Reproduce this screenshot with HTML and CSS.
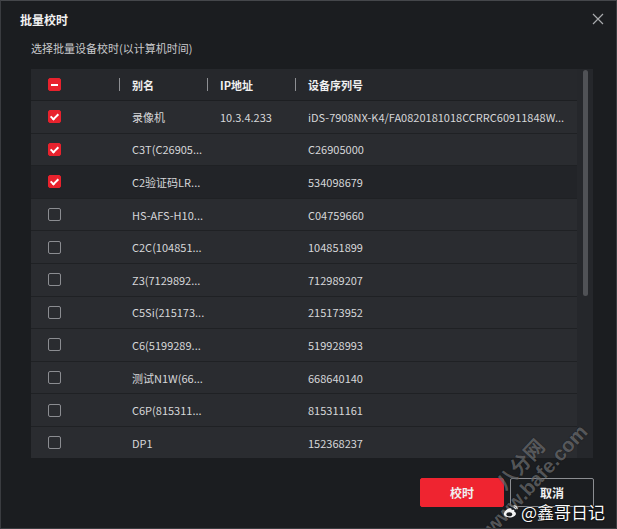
FILE: index.html
```html
<!DOCTYPE html>
<html lang="zh-CN">
<head>
  <meta charset="UTF-8" />
  <meta name="viewport" content="width=device-width, initial-scale=1" />
  <title>批量校时</title>
  <link rel="stylesheet" href="styles.css">
</head>
<body>
  <div class="dialog">

    <div class="dialog-head">
      <h2>批量校时</h2>
      <span class="close">
        <svg viewBox="0 0 12 12" aria-hidden="true">
          <path d="M1 1L11 11M11 1L1 11" />
        </svg>
      </span>
    </div>

    <p class="hint">选择批量设备校时(以计算机时间)</p>

    <div class="list">
      <div class="list-body">
        <div class="row head">
          <div class="cell chk"><span class="box part"></span></div>
          <div class="cell name"><i class="sep"></i>别名</div>
          <div class="cell ip"><i class="sep"></i>IP地址</div>
          <div class="cell sn"><i class="sep"></i>设备序列号</div>
        </div>
        <div class="row">
          <div class="cell chk"><span class="box on"></span></div>
          <div class="cell name">录像机</div>
          <div class="cell ip">10.3.4.233</div>
          <div class="cell sn">iDS-7908NX-K4/FA0820181018CCRRC60911848W...</div>
        </div>
        <div class="row">
          <div class="cell chk"><span class="box on"></span></div>
          <div class="cell name">C3T(C26905...</div>
          <div class="cell ip"></div>
          <div class="cell sn">C26905000</div>
        </div>
        <div class="row hover">
          <div class="cell chk"><span class="box on"></span></div>
          <div class="cell name">C2验证码LR...</div>
          <div class="cell ip"></div>
          <div class="cell sn">534098679</div>
        </div>
        <div class="row">
          <div class="cell chk"><span class="box"></span></div>
          <div class="cell name">HS-AFS-H10...</div>
          <div class="cell ip"></div>
          <div class="cell sn">C04759660</div>
        </div>
        <div class="row">
          <div class="cell chk"><span class="box"></span></div>
          <div class="cell name">C2C(104851...</div>
          <div class="cell ip"></div>
          <div class="cell sn">104851899</div>
        </div>
        <div class="row">
          <div class="cell chk"><span class="box"></span></div>
          <div class="cell name">Z3(7129892...</div>
          <div class="cell ip"></div>
          <div class="cell sn">712989207</div>
        </div>
        <div class="row">
          <div class="cell chk"><span class="box"></span></div>
          <div class="cell name">C5Si(215173...</div>
          <div class="cell ip"></div>
          <div class="cell sn">215173952</div>
        </div>
        <div class="row">
          <div class="cell chk"><span class="box"></span></div>
          <div class="cell name">C6(5199289...</div>
          <div class="cell ip"></div>
          <div class="cell sn">519928993</div>
        </div>
        <div class="row">
          <div class="cell chk"><span class="box"></span></div>
          <div class="cell name">测试N1W(66...</div>
          <div class="cell ip"></div>
          <div class="cell sn">668640140</div>
        </div>
        <div class="row">
          <div class="cell chk"><span class="box"></span></div>
          <div class="cell name">C6P(815311...</div>
          <div class="cell ip"></div>
          <div class="cell sn">815311161</div>
        </div>
        <div class="row">
          <div class="cell chk"><span class="box"></span></div>
          <div class="cell name">DP1</div>
          <div class="cell ip"></div>
          <div class="cell sn">152368237</div>
        </div>
      </div>
      <div class="scroll"><span class="thumb"></span></div>
    </div>

    <div class="actions">
      <button class="btn primary">校时</button>
      <button class="btn">取消</button>
    </div>

    <div class="mark-site">
      <span>八分网</span>
      <span>www.bafe.com</span>
    </div>
    <div class="mark-user">
      <svg viewBox="0 0 20 16" aria-hidden="true">
        <path d="M8.5 4.2C5.2 5.6 2.2 8.6 2.2 11c0 2.4 3.1 4 6.6 4 4.4 0 7.6-2.3 7.6-4.4 0-1.3-1.1-2-2-2.2.4-1 .4-2.2-.8-2.4-1-.1-2.3.5-2.3.5.2-.9.2-2.4-1.4-2.4-.4 0-.9.1-1.4.1z" />
        <ellipse cx="8.6" cy="11.3" rx="3.4" ry="2.4" class="hole" />
        <path d="M13.6 1.4c2.4-.4 4.4 1.4 4.2 3.8M13.8 3.4c1.1-.2 2.1.7 2 1.8" class="wave" />
      </svg>
      <span>@鑫哥日记</span>
    </div>
  </div>
</body>
</html>
```

FILE: styles.css
```css
* {
  box-sizing: border-box;
}
html, body {
  height: 100%;
}
body {
  margin: 0;
  background: #1b1d20;
  font-family: "Noto Sans CJK SC", "Noto Sans", sans-serif;
  font-size: 11px;
  color: #d6d7d9;
}
.dialog {
  position: relative;
  height: 100%;
  border: 1px solid #3a3c40;
  border-top-color: #45474b;
  background: #1b1d20;
  display: flex;
  flex-direction: column;
  overflow: hidden;
}
.dialog-head {
  display: flex;
  align-items: center;
  justify-content: space-between;
  height: 35px;
  padding: 1px 12px 0 19px;
}
.dialog-head h2 {
  margin: 0;
  font-size: 12px;
  font-weight: bold;
  color: #f2f2f2;
}
.close {
  width: 12px;
  height: 12px;
  display: flex;
}
.close svg {
  width: 12px;
  height: 12px;
  stroke: #a8aaad;
  stroke-width: 1.2;
  fill: none;
}
.hint {
  margin: 4px 0 0 30px;
  height: 29px;
  color: #c9cacc;
  font-size: 11px;
  line-height: 16px;
}
.list {
  display: flex;
  margin: 0 23px 0 30px;
  height: 389px;
  background: #25272b;
}
.list-body {
  width: 546px;
  height: 389px;
  overflow: hidden;
}
.row {
  display: flex;
  align-items: center;
  height: 32.6px;
  background: #2a2c30;
  border-bottom: 1px solid #1f2124;
}
.row.head {
  height: 32px;
  background: #26282c;
  border-bottom: 1px solid #1d1f22;
  font-weight: bold;
  color: #f0f0f0;
}
.row.hover {
  background: #222428;
}
.cell {
  display: flex;
  align-items: center;
  white-space: nowrap;
  overflow: hidden;
}
.chk {
  width: 88px;
  padding-left: 17px;
}
.name, .ip {
  width: 88px;
}
.sn {
  flex: 1;
}
.row:not(.head) .name,
.row:not(.head) .ip,
.row:not(.head) .sn {
  padding-left: 13px;
}
.sep {
  width: 1px;
  height: 13px;
  background: #8d8f93;
  margin-right: 12px;
}
.box {
  width: 13px;
  height: 13px;
  border: 1px solid #8b8d91;
  border-radius: 2px;
  position: relative;
}
.box.on, .box.part {
  background: #e8222d;
  border-color: #e8222d;
}
.box.on::after {
  content: "";
  position: absolute;
  left: 3px;
  top: 1px;
  width: 3px;
  height: 6px;
  border: solid #fff;
  border-width: 0 2px 2px 0;
  transform: rotate(45deg);
}
.box.part::after {
  content: "";
  position: absolute;
  left: 2px;
  top: 5px;
  width: 7px;
  height: 2px;
  background: #fff;
}
.scroll {
  flex: 1;
  display: flex;
  justify-content: center;
  padding: 1px 0 0 0;
}
.thumb {
  width: 5px;
  height: 226px;
  border-radius: 3px;
  background: #505256;
}
.actions {
  display: flex;
  justify-content: flex-end;
  gap: 6px;
  margin-top: 20px;
  padding-right: 22px;
}
.btn {
  width: 84px;
  height: 29px;
  border: 1px solid #8b8d91;
  border-radius: 2px;
  background: transparent;
  color: #f0f0f0;
  font-family: inherit;
  font-size: 12px;
  font-weight: bold;
}
.btn.primary {
  background: #ef2430;
  border-color: #ef2430;
}
/* diagonal site watermark over the button area */
.mark-site {
  position: absolute;
  left: 458px;
  top: 450px;
  display: flex;
  flex-direction: column;
  align-items: center;
  transform: rotate(-47deg);
  color: rgba(175, 177, 181, 0.45);
  font-weight: bold;
  font-family: "Liberation Sans", "Noto Sans CJK SC", sans-serif;
  line-height: 1.05;
  text-shadow: 0 0 1px rgba(0, 0, 0, 0.6);
  pointer-events: none;
}
.mark-site span {
  font-size: 20px;
}
.mark-user {
  position: absolute;
  right: 11px;
  bottom: 4px;
  display: flex;
  align-items: center;
  gap: 2px;
  color: #fafafa;
  font-size: 17px;
  text-shadow: 0 0 2px #000, 0 0 1px #000;
  pointer-events: none;
}
.mark-user svg {
  width: 17px;
  height: 15px;
}
.mark-user svg path {
  fill: #f4f4f4;
}
.mark-user svg .hole {
  fill: #1b1d20;
}
.mark-user svg .wave {
  fill: none;
  stroke: #f4f4f4;
  stroke-width: 1.2;
}
```
